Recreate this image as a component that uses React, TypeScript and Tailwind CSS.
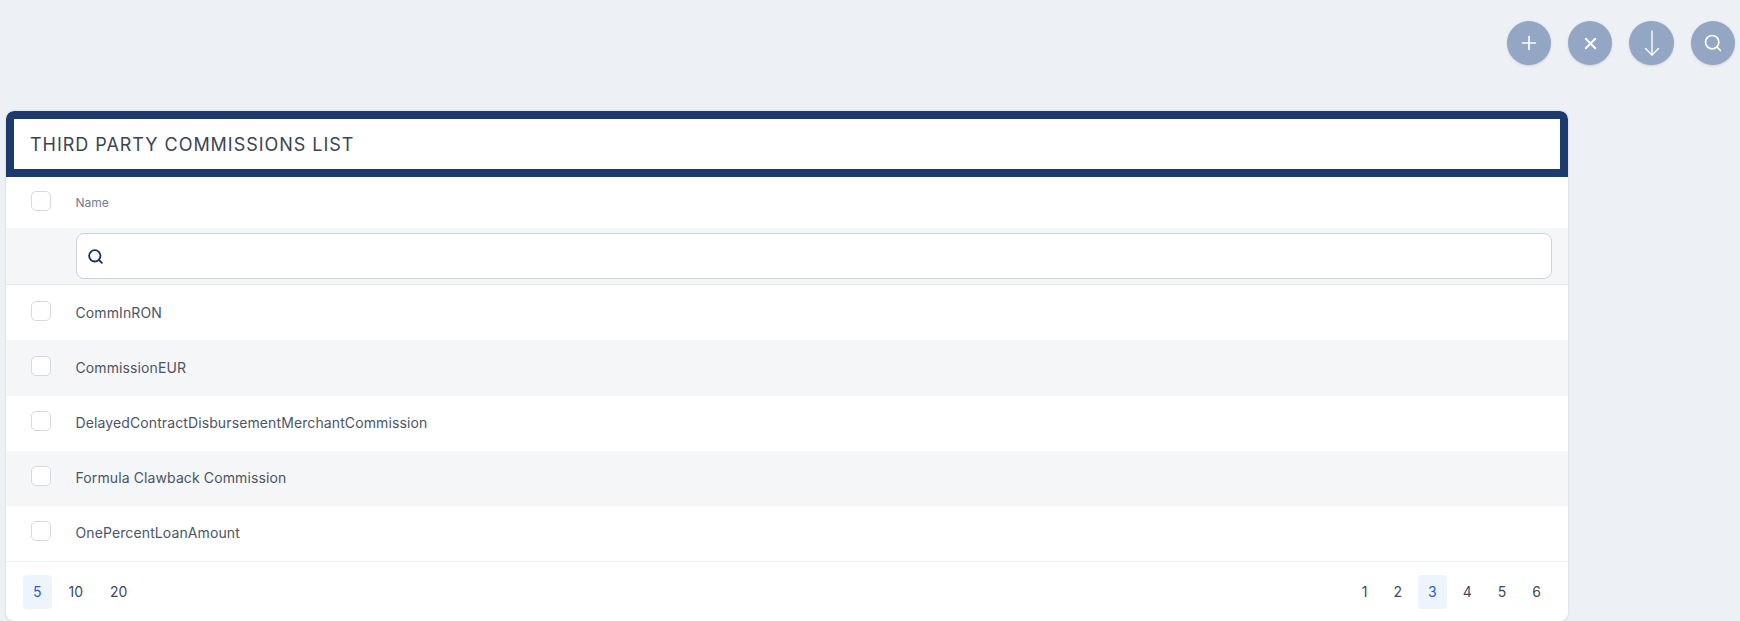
import { Plus, X, Search } from "lucide-react";

const rows = [
  "CommInRON",
  "CommissionEUR",
  "DelayedContractDisbursementMerchantCommission",
  "Formula Clawback Commission",
  "OnePercentLoanAmount",
];

function Checkbox() {
  return <div className="w-5 h-5 rounded-[5px] border border-[#d5d9e2] bg-white shrink-0" />;
}

function RoundButton({ children, wide }: { children: React.ReactNode; wide?: boolean }) {
  return (
    <button
      className={`h-11 rounded-full bg-[#93a6c4] flex items-center justify-center text-white shadow-sm ${
        wide ? "w-[45px]" : "w-11"
      }`}
    >
      {children}
    </button>
  );
}

function PageButton({ label, active }: { label: string; active?: boolean }) {
  return (
    <span
      className={`h-[34px] px-[10px] flex items-center justify-center rounded text-sm ${
        active ? "bg-[#eef4fe] text-[#2563c9]" : "text-[#3f4a5c]"
      }`}
    >
      {label}
    </span>
  );
}

export default function App() {
  return (
    <div
      className="h-[621px] overflow-hidden bg-[#edf1f5] pl-[6px]"
      style={{ fontFamily: "Inter, sans-serif" }}
    >
      <div className="h-[111px] pt-[21px] pr-[5px] flex justify-end gap-[17px]">
        <RoundButton>
          <Plus size={22} strokeWidth={1.8} />
        </RoundButton>
        <RoundButton>
          <X size={19} strokeWidth={2.4} />
        </RoundButton>
        <RoundButton wide>
          <svg width="16" height="26" viewBox="0 0 16 26" fill="none" stroke="currentColor" strokeWidth="1.4" strokeLinecap="round" strokeLinejoin="round">
            <path d="M8 1v24" />
            <path d="M1.500 18.500 8 25l6.500-6.500" />
          </svg>
        </RoundButton>
        <RoundButton>
          <Search size={20} strokeWidth={2} />
        </RoundButton>
      </div>

      <div className="w-[1562px] h-[510px] bg-white rounded-lg shadow-[0_0_2px_rgba(100,116,139,0.35)] overflow-hidden flex flex-col">
        <div className="h-[66px] border-8 border-[#1c3a6b] flex items-center pl-[16px] rounded-t-lg shrink-0">
          <span className="text-lg tracking-[0.97px] text-[#3a4454] mt-px">THIRD PARTY COMMISSIONS LIST</span>
        </div>

        <div className="h-[51px] flex items-center shrink-0">
          <div className="w-[69.5px] pl-[25px] -mt-[3px]">
            <Checkbox />
          </div>
          <span className="text-xs text-[#727c8f]">Name</span>
        </div>

        <div className="h-[57px] bg-[#f4f6f8] border-b border-[#e4e7ec] pl-[70px] pr-4 pt-[5px] shrink-0">
          <div className="h-[46px] bg-white border border-[#cdd3de] rounded-lg flex items-center pl-[10px]">
            <Search size={17} strokeWidth={2.6} className="text-[#1a3068]" />
          </div>
        </div>

        {rows.map((name, i) => (
          <div
            key={name}
            className={`flex items-center shrink-0 ${i === 1 ? "h-14 bg-[#f5f6f8]" : i === 3 ? "h-[55px] pb-[2px] bg-[#f5f6f8]" : i === 0 ? "h-[55px] bg-white" : "h-[55px] pb-[2px] bg-white"}`}
          >
            <div className={`w-[69.5px] pl-[25px] ${i === 1 ? "-mt-[5px]" : "-mt-[3px]"}`}>
              <Checkbox />
            </div>
            <span className="text-sm tracking-[0.11px] text-[#4b5565]">{name}</span>
          </div>
        ))}

        <div className="flex-1 border-t border-[#ebf0f3] flex justify-between items-start pt-[13px] px-[17px]">
          <div className="flex gap-[7px]">
            <PageButton label="5" active />
            <PageButton label="10" />
            <PageButton label="20" />
          </div>
          <div className="flex gap-[6px]">
            <PageButton label="1" />
            <PageButton label="2" />
            <PageButton label="3" active />
            <PageButton label="4" />
            <PageButton label="5" />
            <PageButton label="6" />
          </div>
        </div>
      </div>
    </div>
  );
}
